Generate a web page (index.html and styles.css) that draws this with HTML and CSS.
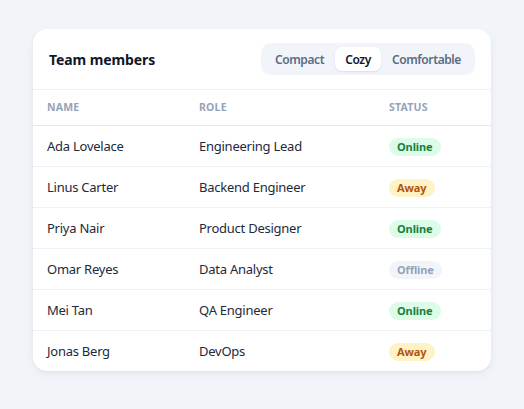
FILE: index.html
```html
<!DOCTYPE html>
<html>
<head>
<meta charset="utf-8">
<link rel="stylesheet" href="styles.css">
</head>
<body>
<div class="card">
  <div class="header">
    <div class="title">Team members</div>
    <div class="seg">
      <button class="seg-btn">Compact</button>
      <button class="seg-btn active">Cozy</button>
      <button class="seg-btn">Comfortable</button>
    </div>
  </div>
  <table class="tbl">
    <thead>
      <tr><th class="c-name">Name</th><th class="c-role">Role</th><th class="c-status">Status</th></tr>
    </thead>
    <tbody>
      <tr><td>Ada Lovelace</td><td>Engineering Lead</td><td><span class="badge online">Online</span></td></tr>
      <tr><td>Linus Carter</td><td>Backend Engineer</td><td><span class="badge away">Away</span></td></tr>
      <tr><td>Priya Nair</td><td>Product Designer</td><td><span class="badge online">Online</span></td></tr>
      <tr><td>Omar Reyes</td><td>Data Analyst</td><td><span class="badge offline">Offline</span></td></tr>
      <tr><td>Mei Tan</td><td>QA Engineer</td><td><span class="badge online">Online</span></td></tr>
      <tr><td>Jonas Berg</td><td>DevOps</td><td><span class="badge away">Away</span></td></tr>
    </tbody>
  </table>
</div>
</body>
</html>
```
FILE: styles.css
```css
* { box-sizing: border-box; }
html, body { margin: 0; padding: 0; }
body {
  background: #f1f4f9;
  font-family: "Noto Sans", "Open Sans", sans-serif;
  color: #1e293b;
  padding: 29px 33px;
  width: 524px;
  height: 409px;
}
.card {
  width: 458px;
  background: #fff;
  border-radius: 14px;
  box-shadow: 0 1px 3px rgba(15, 23, 42, 0.06), 0 4px 12px rgba(15, 23, 42, 0.04);
  overflow: hidden;
}
.header {
  display: flex;
  align-items: center;
  justify-content: space-between;
  height: 61px;
  padding: 0 16px 0 16px;
  border-bottom: 1px solid #eef1f6;
}
.title {
  font-size: 14px;
  font-weight: 700;
  color: #0f172a;
  letter-spacing: -0.1px;
}
.seg {
  display: flex;
  gap: 1px;
  background: #f1f4f9;
  border-radius: 10px;
  padding: 4px;
  height: 32px;
}
.seg-btn {
  border: none;
  background: transparent;
  font-family: inherit;
  font-size: 12px;
  font-weight: 600;
  letter-spacing: -0.4px;
  color: #5b6b84;
  padding: 0 10px;
  border-radius: 7px;
  cursor: pointer;
}
.seg-btn.active {
  background: #fff;
  color: #0f172a;
  box-shadow: 0 1px 2px rgba(15, 23, 42, 0.1);
}
.tbl {
  width: 100%;
  border-collapse: collapse;
}
.tbl th {
  text-align: left;
  font-size: 10.5px;
  font-weight: 700;
  letter-spacing: 0.2px;
  text-transform: uppercase;
  color: #94a3b8;
  height: 35px;
  padding: 0 14px;
  border-bottom: 1px solid #e2e8f0;
}
.c-name { width: 152px; }
.c-role { width: 190px; }
.tbl td {
  height: 41px;
  padding: 1px 14px 0;
  font-size: 13px;
  letter-spacing: -0.25px;
  color: #1e293b;
  border-bottom: 1px solid #eef1f6;
}
.tbl tbody tr:last-child td { border-bottom: none; }
.badge {
  display: inline-block;
  font-size: 11px;
  font-weight: 700;
  letter-spacing: -0.1px;
  padding: 1px 8px;
  border-radius: 999px;
  line-height: 16px;
}
.online { background: #dcfce7; color: #15803d; }
.away { background: #fef3c7; color: #b45309; }
.offline { background: #f1f5f9; color: #94a3b8; }
```
